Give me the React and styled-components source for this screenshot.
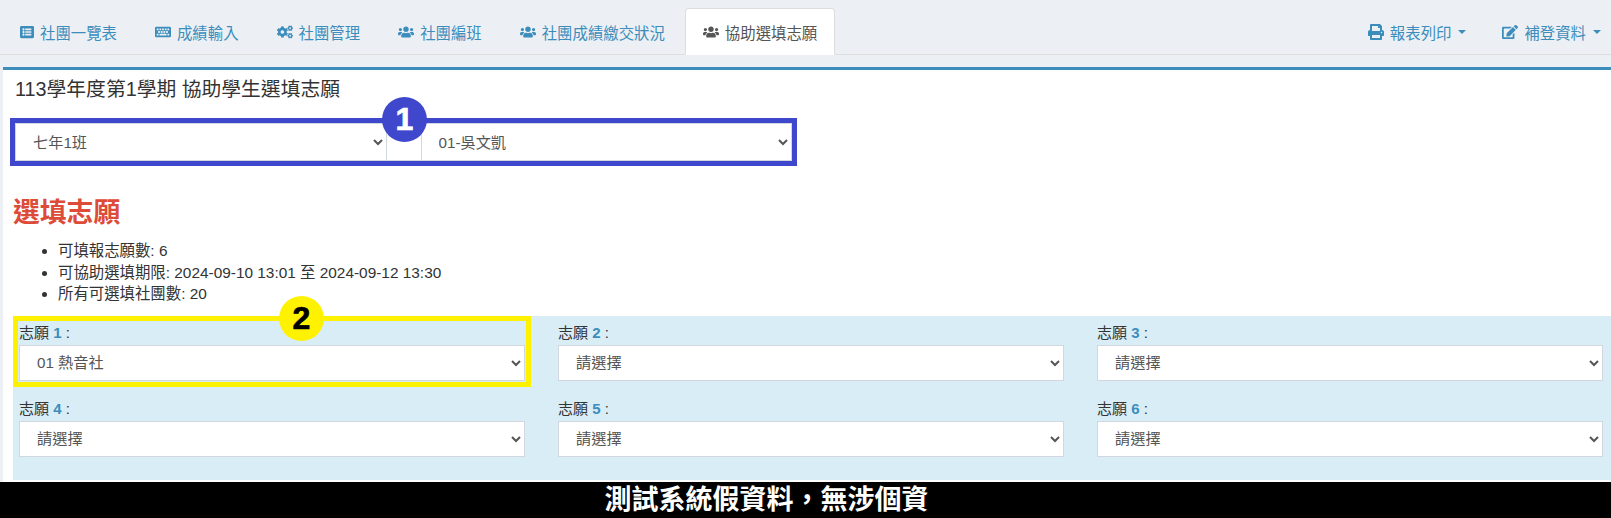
import React from 'react';
import styled, { createGlobalStyle } from 'styled-components';
import { FaListAlt, FaKeyboard, FaCogs, FaUsers, FaPrint, FaEdit } from 'react-icons/fa';

const GlobalStyle = createGlobalStyle`
html, body {
  margin: 0;
  padding: 0;
  height: 518px;
  overflow: hidden;
  background: #ecf0f5;
  font-family: "Liberation Sans", "Noto Sans CJK TC", sans-serif;
  color: #333;
}
* { box-sizing: border-box; }
`;

const Page = styled.div`
display: flex;
flex-direction: column;
height: 518px;
`;

const Nav = styled.div`
display: flex;
align-items: flex-end;
height: 55px;
flex: none;
padding-left: 2px;
border-bottom: 1px solid #ddd;
`;

const Tab = styled.div`
display: flex;
align-items: center;
gap: 6px;
height: 47px;
padding: 0 17px;
margin-right: ${props => props.$gap ?? 2}px;
margin-bottom: -1px;
font-size: 15.4px;
white-space: nowrap;
color: ${props => props.$active ? '#555' : '#3c8dbc'};
background: ${props => props.$active ? '#fff' : 'transparent'};
border: 1px solid ${props => props.$active ? '#ddd' : 'transparent'};
border-bottom-color: ${props => props.$active ? '#fff' : 'transparent'};
border-radius: 4px 4px 0 0;

svg { height: ${props => props.$iconSize || 16}px; width: auto; flex: none; }
`;

const NavRight = styled.div`
display: flex;
margin-left: auto;
`;

const Caret = styled.span`
width: 0;
height: 0;
margin-left: 1px;
border-top: 4px solid currentColor;
border-left: 4px solid transparent;
border-right: 4px solid transparent;
`;

const Box = styled.div`
flex: 1;
margin: 12px 0 0 3px;
padding: 0 0 2px 10px;
background: #fff;
border-top: 3px solid #3c8dbc;
display: flex;
flex-direction: column;
`;

const Title = styled.h3`
margin: 7px 0 0 2px;
font-size: 19.8px;
line-height: 24px;
font-weight: 400;
color: #333;
`;

const PickerGroup = styled.div`
position: relative;
display: flex;
width: 777px;
height: 38px;
margin: 22px 0 0 2px;
outline: 5px solid #3f48cc;
`;

const Select = styled.select`
flex: 1;
min-width: 0;
width: 100%;
height: ${props => props.$height || 38}px;
padding: 0 13px;
border: 1px solid #d2d6de;
border-radius: 0;
background: #fff;
color: #555;
font-family: inherit;
font-size: 15.2px;
`;

const Addon = styled.span`
flex: none;
width: 34px;
background: #fff;
border-top: 1px solid #d2d6de;
border-bottom: 1px solid #d2d6de;
`;

const Badge = styled.span`
position: absolute;
left: ${props => props.$left}px;
top: ${props => props.$top}px;
width: 45px;
height: 45px;
border-radius: 50%;
display: flex;
align-items: center;
justify-content: center;
font-size: 32px;
font-weight: 700;
background: ${props => props.$bg};
color: ${props => props.$fg};
-webkit-text-stroke: 0.7px ${props => props.$fg};
`;

const Heading = styled.h2`
margin: 36px 0 0;
font-size: 26.8px;
line-height: 32px;
font-weight: 700;
color: #dd4b39;
`;

const Info = styled.ul`
margin: 11px 0 0;
padding: 0 0 0 45px;
list-style: disc;
font-size: 15.4px;
line-height: 21.5px;
color: #333;
`;

const Panel = styled.div`
flex: 1;
margin-top: 11px;
padding: 6px 7px 0 6px;
background: #d9edf7;
display: grid;
grid-template-columns: repeat(3, 506px);
grid-auto-rows: 76px;
column-gap: 33px;
`;

const Field = styled.div`
position: relative;
height: 59px;
${props => props.$marked && 'outline: 5px solid #fff200; outline-offset: 1px;'}
`;

const FieldLabel = styled.div`
font-size: 15px;
line-height: 22px;
height: 23px;
color: #333;

b { color: #3c8dbc; }
`;

const Banner = styled.div`
flex: none;
height: 36px;
padding-right: 78px;
background: #000;
color: #fff;
font-size: 27px;
font-weight: 700;
line-height: 36px;
text-align: center;
`;

const tabs = [
  { icon: <FaListAlt />, label: '社團一覽表', iconSize: 14 },
  { icon: <FaKeyboard />, label: '成績輸入' },
  { icon: <FaCogs />, label: '社團管理' },
  { icon: <FaUsers />, label: '社團編班' },
  { icon: <FaUsers />, label: '社團成績繳交狀況' },
  { icon: <FaUsers />, label: '協助選填志願', active: true },
];

const wishes = [
  { id: 1, value: '01 熱音社', marked: true },
  { id: 2, value: '請選擇' },
  { id: 3, value: '請選擇' },
  { id: 4, value: '請選擇' },
  { id: 5, value: '請選擇' },
  { id: 6, value: '請選擇' },
];

const App = () => (
  <Page>
    <GlobalStyle />
    <Nav>
      {tabs.map((tab) => (
        <Tab key={tab.label} $active={tab.active} $iconSize={tab.iconSize}>
          {tab.icon}
          {tab.label}
        </Tab>
      ))}
      <NavRight>
        <Tab $gap={0}><FaPrint />報表列印<Caret /></Tab>
        <Tab $gap={-8}><FaEdit />補登資料<Caret /></Tab>
      </NavRight>
    </Nav>
    <Box>
      <Title>113學年度第1學期 協助學生選填志願</Title>
      <PickerGroup>
        <Select defaultValue="七年1班"><option>七年1班</option></Select>
        <Addon />
        <Select defaultValue="01-吳文凱"><option>01-吳文凱</option></Select>
        <Badge $left={367} $top={-26} $bg="#3f48cc" $fg="#fff">1</Badge>
      </PickerGroup>
      <Heading>選填志願</Heading>
      <Info>
        <li>可填報志願數: 6</li>
        <li>可協助選填期限: 2024-09-10 13:01 至 2024-09-12 13:30</li>
        <li>所有可選填社團數: 20</li>
      </Info>
      <Panel>
        {wishes.map((wish) => (
          <Field key={wish.id} $marked={wish.marked}>
            <FieldLabel>志願 <b>{wish.id}</b> :</FieldLabel>
            <Select $height={36} defaultValue={wish.value}><option>{wish.value}</option></Select>
            {wish.marked && <Badge $left={260} $top={-26} $bg="#fff200" $fg="#000">2</Badge>}
          </Field>
        ))}
      </Panel>
    </Box>
    <Banner>測試系統假資料，無涉個資</Banner>
  </Page>
);

export default App;
